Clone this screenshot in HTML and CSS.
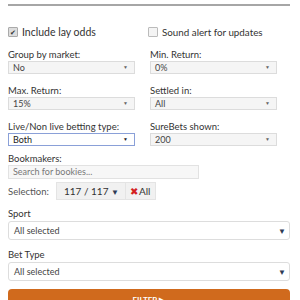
FILE: index.html
```html
<!DOCTYPE html>
<html lang="en">
<head>
    <meta charset="UTF-8">
    <title>SureBets Filter</title>
    <link rel="stylesheet" href="styles.css">
</head>
<body>
    <div class="panel">
        <div class="top-line"></div>

        <div class="grid">
            <label class="check-row"><span class="box checked">&#10004;</span>Include lay odds</label>
            <label class="check-row"><span class="box"></span>Sound alert for updates</label>

            <div class="field">
                <div class="label">Group by market:</div>
                <div class="mini-select">No<span class="arrow">&#9660;</span></div>
            </div>
            <div class="field">
                <div class="label">Min. Return:</div>
                <div class="mini-select">0%<span class="arrow">&#9660;</span></div>
            </div>

            <div class="field">
                <div class="label">Max. Return:</div>
                <div class="mini-select">15%<span class="arrow">&#9660;</span></div>
            </div>
            <div class="field">
                <div class="label">Settled in:</div>
                <div class="mini-select">All<span class="arrow">&#9660;</span></div>
            </div>

            <div class="field">
                <div class="label">Live/Non live betting type:</div>
                <div class="mini-select focus">Both<span class="arrow dark">&#9660;</span></div>
            </div>
            <div class="field">
                <div class="label">SureBets shown:</div>
                <div class="mini-select">200<span class="arrow">&#9660;</span></div>
            </div>
        </div>

        <div class="label bookies-label">Bookmakers:</div>
        <div class="search">Search for bookies...</div>

        <div class="selection">
            <span class="sel-label">Selection:</span>
            <span class="btn">117 / 117 <span class="caret">&#9660;</span></span>
            <span class="btn"><span class="x">&#10006;</span>All</span>
        </div>

        <div class="label big-label">Sport</div>
        <div class="big-select">All selected<span class="caret">&#9660;</span></div>

        <div class="label big-label">Bet Type</div>
        <div class="big-select">All selected<span class="caret">&#9660;</span></div>

        <div class="filter-btn">FILTER &#9654;</div>
    </div>
</body>
</html>
```

FILE: styles.css
```css
body {
    margin: 0;
    background: #fff;
    font-family: Lato, "Open Sans", sans-serif;
    color: #333;
    font-size: 10px;
}
.panel {
    width: 282px;
    height: 296px;
    overflow: hidden;
    padding: 4px 0 0 8px;
}
.top-line {
    height: 2px;
    background: #a6a6a6;
}
.grid {
    display: grid;
    grid-template-columns: 127px 127px;
    column-gap: 15px;
    row-gap: 11px;
    margin-top: 20px;
}
.check-row {
    display: flex;
    align-items: center;
    gap: 4px;
    height: 12px;
    font-size: 10.5px;
}
.grid .check-row:nth-child(2) {
    margin-left: -2px;
    font-size: 9.8px;
}
.box {
    width: 8px;
    height: 8px;
    border: 1px solid #bbb;
    border-radius: 1px;
    background: #f4f4f4;
    font-size: 7px;
    line-height: 8px;
    text-align: center;
    color: #333;
}
.box.checked {
    background: #ddd;
    border-color: #aaa;
}
.label {
    font-size: 9.5px;
    line-height: 12px;
    color: #333;
}
.field .label {
    line-height: 11px;
    margin-bottom: 1px;
}
.mini-select {
    position: relative;
    height: 11px;
    line-height: 11px;
    border: 1px solid #dcdcdc;
    background: #f5f5f5;
    padding-left: 4px;
    font-size: 9px;
    color: #444;
}
.mini-select.focus {
    border-color: #8aa0d8;
    background: #fff;
    color: #222;
}
.arrow {
    position: absolute;
    right: 6px;
    top: 0;
    font-size: 5px;
    color: #666;
}
.arrow.dark {
    color: #222;
}
.bookies-label {
    margin-top: 7px;
}
.search {
    width: 185px;
    height: 12px;
    line-height: 12px;
    border: 1px solid #e2e2e2;
    background: #f7f7f7;
    padding-left: 4px;
    font-size: 9px;
    color: #777;
}
.selection {
    display: flex;
    align-items: center;
    margin-top: 3px;
    height: 18px;
}
.sel-label {
    flex: none;
    width: 48px;
    font-size: 9.5px;
    color: #555;
}
.btn {
    height: 16px;
    line-height: 16px;
    padding: 0 6px 0 7px;
    background: #f1f1f1;
    border: 1px solid #e4e4e4;
    font-size: 10px;
    color: #333;
}
.btn + .btn {
    margin-left: -1px;
    padding: 0 5px 0 4px;
}
.caret {
    font-size: 8px;
    color: #2d3b55;
}
.x {
    color: #d42020;
    font-size: 10px;
    margin-right: 1px;
}
.big-label {
    margin-top: 8px;
}
.big-label + .big-select + .big-label {
    margin-top: 9px;
}
.big-select {
    display: flex;
    justify-content: space-between;
    align-items: center;
    margin-top: 1px;
    height: 17px;
    border: 1px solid #ddd;
    border-radius: 3px;
    padding: 0 3px 0 5px;
    font-size: 9px;
    color: #444;
}
.filter-btn {
    margin-top: 8px;
    height: 26px;
    background: #d06a1d;
    border-radius: 4px;
    color: #fff;
    font-weight: bold;
    font-size: 8px;
    text-align: center;
    line-height: 22px;
}
```
